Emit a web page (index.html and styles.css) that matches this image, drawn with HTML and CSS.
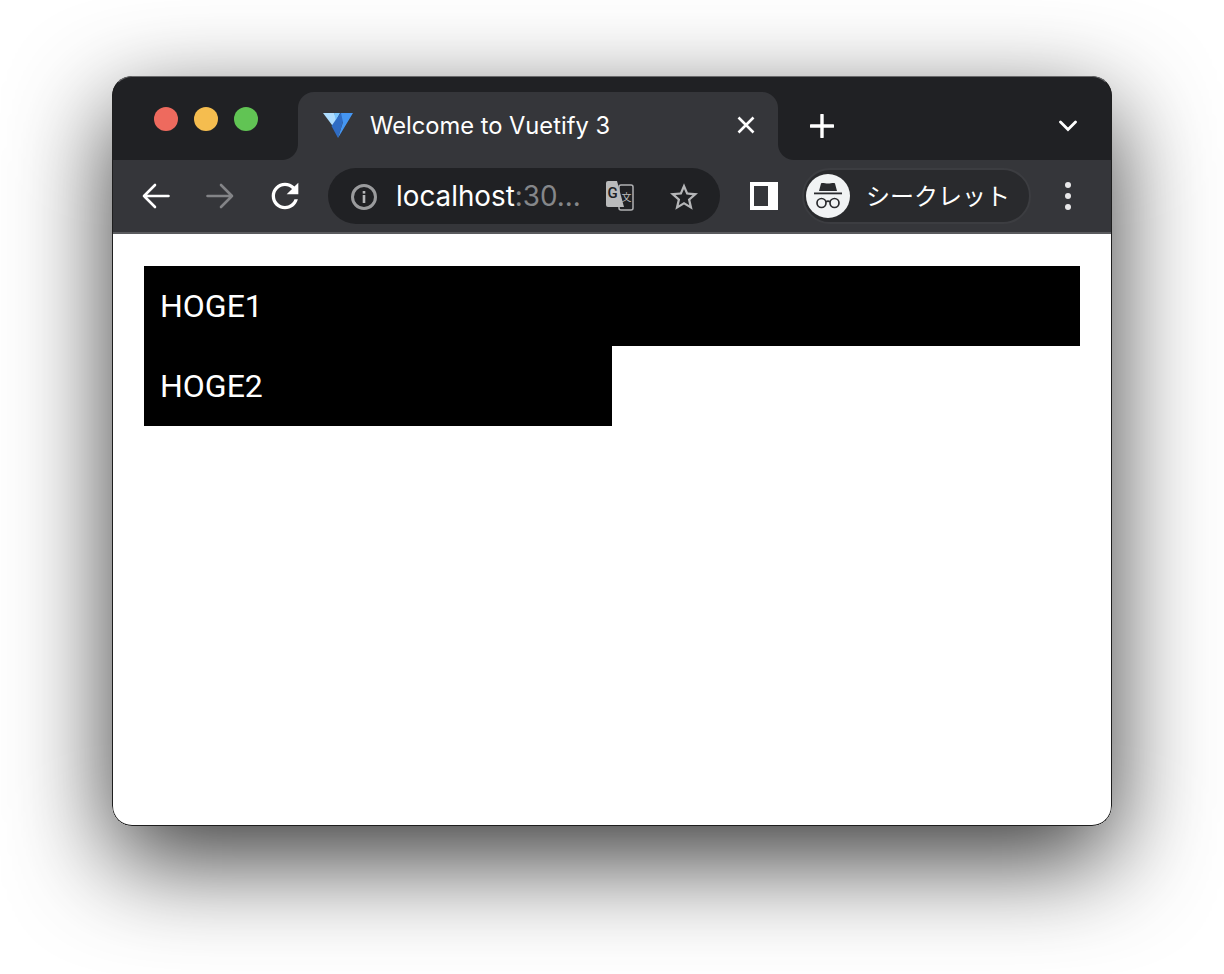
FILE: index.html
```html
<!DOCTYPE html>
<html lang="ja">
<head>
<meta charset="utf-8">
<title>Welcome to Vuetify 3</title>
<link rel="stylesheet" href="styles.css">
</head>
<body>
<div class="window">
  <div class="tabstrip">
    <div class="lights"><span class="light red"></span><span class="light yellow"></span><span class="light green"></span></div>
    <div class="tab">
      <svg class="favicon" viewBox="0 0 30 25"><polygon fill="#aeddff" points="0,0 11,0 14,6 10.500,14"/><polygon fill="#7bc6ff" points="11,0 17,0 13,8"/><polygon fill="#2f6cc4" points="17.500,0 22,2 15,25 8.500,13"/><polygon fill="#4596f2" points="18,0 30,0 15,25 20,9"/></svg>
      <span class="tab-title">Welcome to Vuetify 3</span>
      <svg class="tab-close" viewBox="0 0 18 18"><path d="M1.500 1.500L16.500 16.500M16.500 1.500L1.500 16.500"/></svg>
    </div>
    <svg class="new-tab" viewBox="0 0 24 24"><path d="M12 1V23M1 12H23"/></svg>
    <svg class="tab-menu" viewBox="0 0 18 12"><path d="M1.500 2L9 9.500L16.500 2"/></svg>
  </div>
  <div class="toolbar">
    <svg class="nav" viewBox="0 0 28 26"><path d="M26.500 13H2M13 2L2 13L13 24"/></svg>
    <svg class="nav dim" viewBox="0 0 28 26"><path d="M1.500 13H26M15 2L26 13L15 24"/></svg>
    <svg class="reload" viewBox="0 0 24 24"><path d="M17.650 6.350C16.200 4.900 14.210 4 12 4c-4.420 0-7.990 3.580-7.990 8s3.570 8 7.990 8c3.730 0 6.840-2.550 7.730-6h-2.080c-.820 2.330-3.040 4-5.650 4-3.310 0-6-2.690-6-6s2.690-6 6-6c1.660 0 3.140.690 4.220 1.780L13 11h7V4l-2.350 2.350z"/></svg>
    <div class="omnibox">
      <svg class="info" viewBox="0 0 26 26"><circle cx="13" cy="13" r="11.500"/><rect x="11.700" y="11" width="2.600" height="8"/><rect x="11.700" y="7" width="2.600" height="2.600"/></svg>
      <span class="url">localhost<span class="port">:30...</span></span>
      <svg class="translate" viewBox="0 0 28 30"><rect class="tr-back" x="13" y="4" width="14" height="25" rx="2"/><path class="tr-front" d="M2 0H11L18 26H2A2 2 0 0 1 0 24V2A2 2 0 0 1 2 0Z"/><text class="tr-g" x="1.500" y="17">G</text><text class="tr-x" x="15.500" y="20">文</text></svg>
      <svg class="star" viewBox="2 2 20 19"><path d="M22 9.240l-7.190-.620L12 2 9.190 8.630 2 9.240l5.460 4.730L5.820 21 12 17.270 18.180 21l-1.630-7.030L22 9.240zM12 15.400l-3.760 2.270 1-4.280-3.320-2.880 4.380-.380L12 6.100l1.710 4.040 4.380.380-3.320 2.880 1 4.280L12 15.400z"/></svg>
    </div>
    <div class="sidebar-icon"></div>
    <div class="profile">
      <div class="avatar">
        <svg viewBox="0 0 30 28"><path class="hat" d="M6 9L8 1.500C9 0.500 12 1.500 15 1.500C18 1.500 21 0.500 22 1.500L24 9Z"/><rect class="hat" x="1" y="10.500" width="28" height="1.800"/><circle class="glass" cx="8.500" cy="21" r="4.500"/><circle class="glass" cx="21.500" cy="21" r="4.500"/><path class="glass" d="M13 19.800C14.300 19 15.700 19 17 19.800"/></svg>
      </div>
      <span class="profile-name">シークレット</span>
    </div>
    <div class="kebab"><span></span><span></span><span></span></div>
  </div>
  <div class="divider"></div>
  <main class="content">
    <div class="row full">HOGE1</div>
    <div class="row">HOGE2</div>
  </main>
</div>
</body>
</html>
```

FILE: styles.css
```css
* { box-sizing: border-box; }
html, body { margin: 0; height: 974px; overflow: hidden; background: #fff; }
body { padding: 76px 112px 148px; font-family: "Inter", "Liberation Sans", sans-serif; }

.window {
  position: relative;
  width: 1000px;
  height: 750px;
  border-radius: 20px;
  background: #fff;
  overflow: hidden;
  display: flex;
  flex-direction: column;
  box-shadow: 0 34px 100px rgba(0,0,0,.78);
}
.window::after {
  content: "";
  position: absolute;
  inset: 0;
  border-radius: 20px;
  border: 1px solid #1e1e1e;
  border-top-color: #6a6a6c;
  pointer-events: none;
}

.tabstrip {
  height: 84px;
  flex: none;
  background: #202124;
  display: flex;
  align-items: flex-start;
}
.lights { display: flex; gap: 16px; padding: 31px 0 0 42px; }
.light { width: 24px; height: 24px; border-radius: 50%; }
.red { background: #ee6a5e; }
.yellow { background: #f5bd4f; }
.green { background: #61c454; }

.tab {
  position: relative;
  width: 480px;
  height: 68px;
  margin: 16px 0 0 40px;
  padding: 0 23px 2px 25px;
  background: #35363a;
  border-radius: 16px 16px 0 0;
  display: flex;
  align-items: center;
  color: #fff;
}
.tab::before, .tab::after {
  content: "";
  position: absolute;
  bottom: 0;
  width: 16px;
  height: 16px;
}
.tab::before { left: -16px; background: radial-gradient(circle at 0 0, #202124 15.5px, #35363a 16.5px); }
.tab::after { right: -16px; background: radial-gradient(circle at 100% 0, #202124 15.5px, #35363a 16.5px); }
.favicon { width: 30px; height: 25px; flex: none; margin-right: 17px; }
.tab-title { font-size: 23.7px; white-space: nowrap; flex: 1; }
.tab-close { width: 18px; height: 18px; flex: none; fill: none; stroke: #fff; stroke-width: 2.6; }
.new-tab { width: 24px; height: 24px; margin: 38px 0 0 32px; flex: none; fill: none; stroke: #fff; stroke-width: 3.4; stroke-linecap: round; }
.tab-menu { width: 18px; height: 12px; margin: 44px 0 0 225px; flex: none; fill: none; stroke: #fff; stroke-width: 2.8; stroke-linecap: round; }

.toolbar {
  height: 72px;
  flex: none;
  background: #35363a;
  display: flex;
  align-items: center;
  padding: 0 0 0 30px;
}
.nav { width: 28px; height: 26px; flex: none; margin-right: 36px; fill: none; stroke: #fff; stroke-width: 2.6; stroke-linecap: round; stroke-linejoin: round; }
.nav.dim { stroke: #838487; margin-right: 31px; }
.reload { width: 40px; height: 40px; flex: none; fill: #fff; margin-right: 23px; }

.omnibox {
  width: 392px;
  height: 56px;
  flex: none;
  border-radius: 28px;
  background: #202124;
  display: flex;
  align-items: center;
  padding: 0 0 0 23px;
}
.info { width: 26px; height: 26px; flex: none; margin: 2px 20px 0 0; }
.info circle { fill: none; stroke: #9a9b9d; stroke-width: 3; }
.info rect { fill: #b5b6b8; }
.url { color: #fff; font-size: 27.8px; width: 209px; flex: none; white-space: nowrap; margin-left: -1px; margin-right: 1px; }
.port { color: #85878a; }
.translate { width: 28px; height: 30px; flex: none; margin-right: 36px; }
.tr-back { fill: #202124; stroke: #b0b1b3; stroke-width: 1.5; }
.tr-front { fill: #b9babb; }
.tr-g { font-family: "Roboto", sans-serif; font-size: 15px; font-weight: 500; fill: #202124; }
.tr-x { font-family: "Noto Sans CJK SC", sans-serif; font-size: 10px; fill: #b9babb; }
.star { width: 28px; height: 27px; flex: none; fill: #b5b6b8; }

.sidebar-icon {
  width: 28px;
  height: 28px;
  flex: none;
  margin-left: 30px;
  border: solid #fff;
  border-width: 4px 10px 4px 4px;
  background: #35363a;
}
.profile {
  width: 229px;
  height: 56px;
  flex: none;
  margin-left: 24px;
  border-radius: 28px;
  background: #292a2d;
  border: 2px solid #3c3d41;
  display: flex;
  align-items: center;
  padding-left: 2px;
}
.avatar {
  width: 44px;
  height: 44px;
  flex: none;
  border-radius: 50%;
  background: #f1f3f4;
  display: flex;
  align-items: center;
  justify-content: center;
}
.avatar svg { width: 30px; height: 28px; }
.hat { fill: #2a2b2e; }
.glass { fill: none; stroke: #2a2b2e; stroke-width: 1.7; }
.profile-name {
  margin-left: 16px;
  padding-bottom: 3px;
  color: #fff;
  font-size: 24px;
  font-family: "Noto Sans CJK JP", sans-serif;
  white-space: nowrap;
}
.kebab { display: flex; flex-direction: column; gap: 5px; margin-left: 34px; }
.kebab span { width: 6px; height: 6px; border-radius: 50%; background: #e8e8e9; }

.divider { height: 2px; flex: none; background: #5a5b5e; }

.content {
  flex: 1;
  padding: 32px;
  display: grid;
  grid-template-columns: 1fr 1fr;
  grid-auto-rows: 80px;
  align-content: start;
}
.row {
  background: #000;
  color: #fff;
  font-family: "Roboto", sans-serif;
  font-size: 32px;
  line-height: 48px;
  padding: 16px;
}
.row.full { grid-column: 1 / 3; }
```
